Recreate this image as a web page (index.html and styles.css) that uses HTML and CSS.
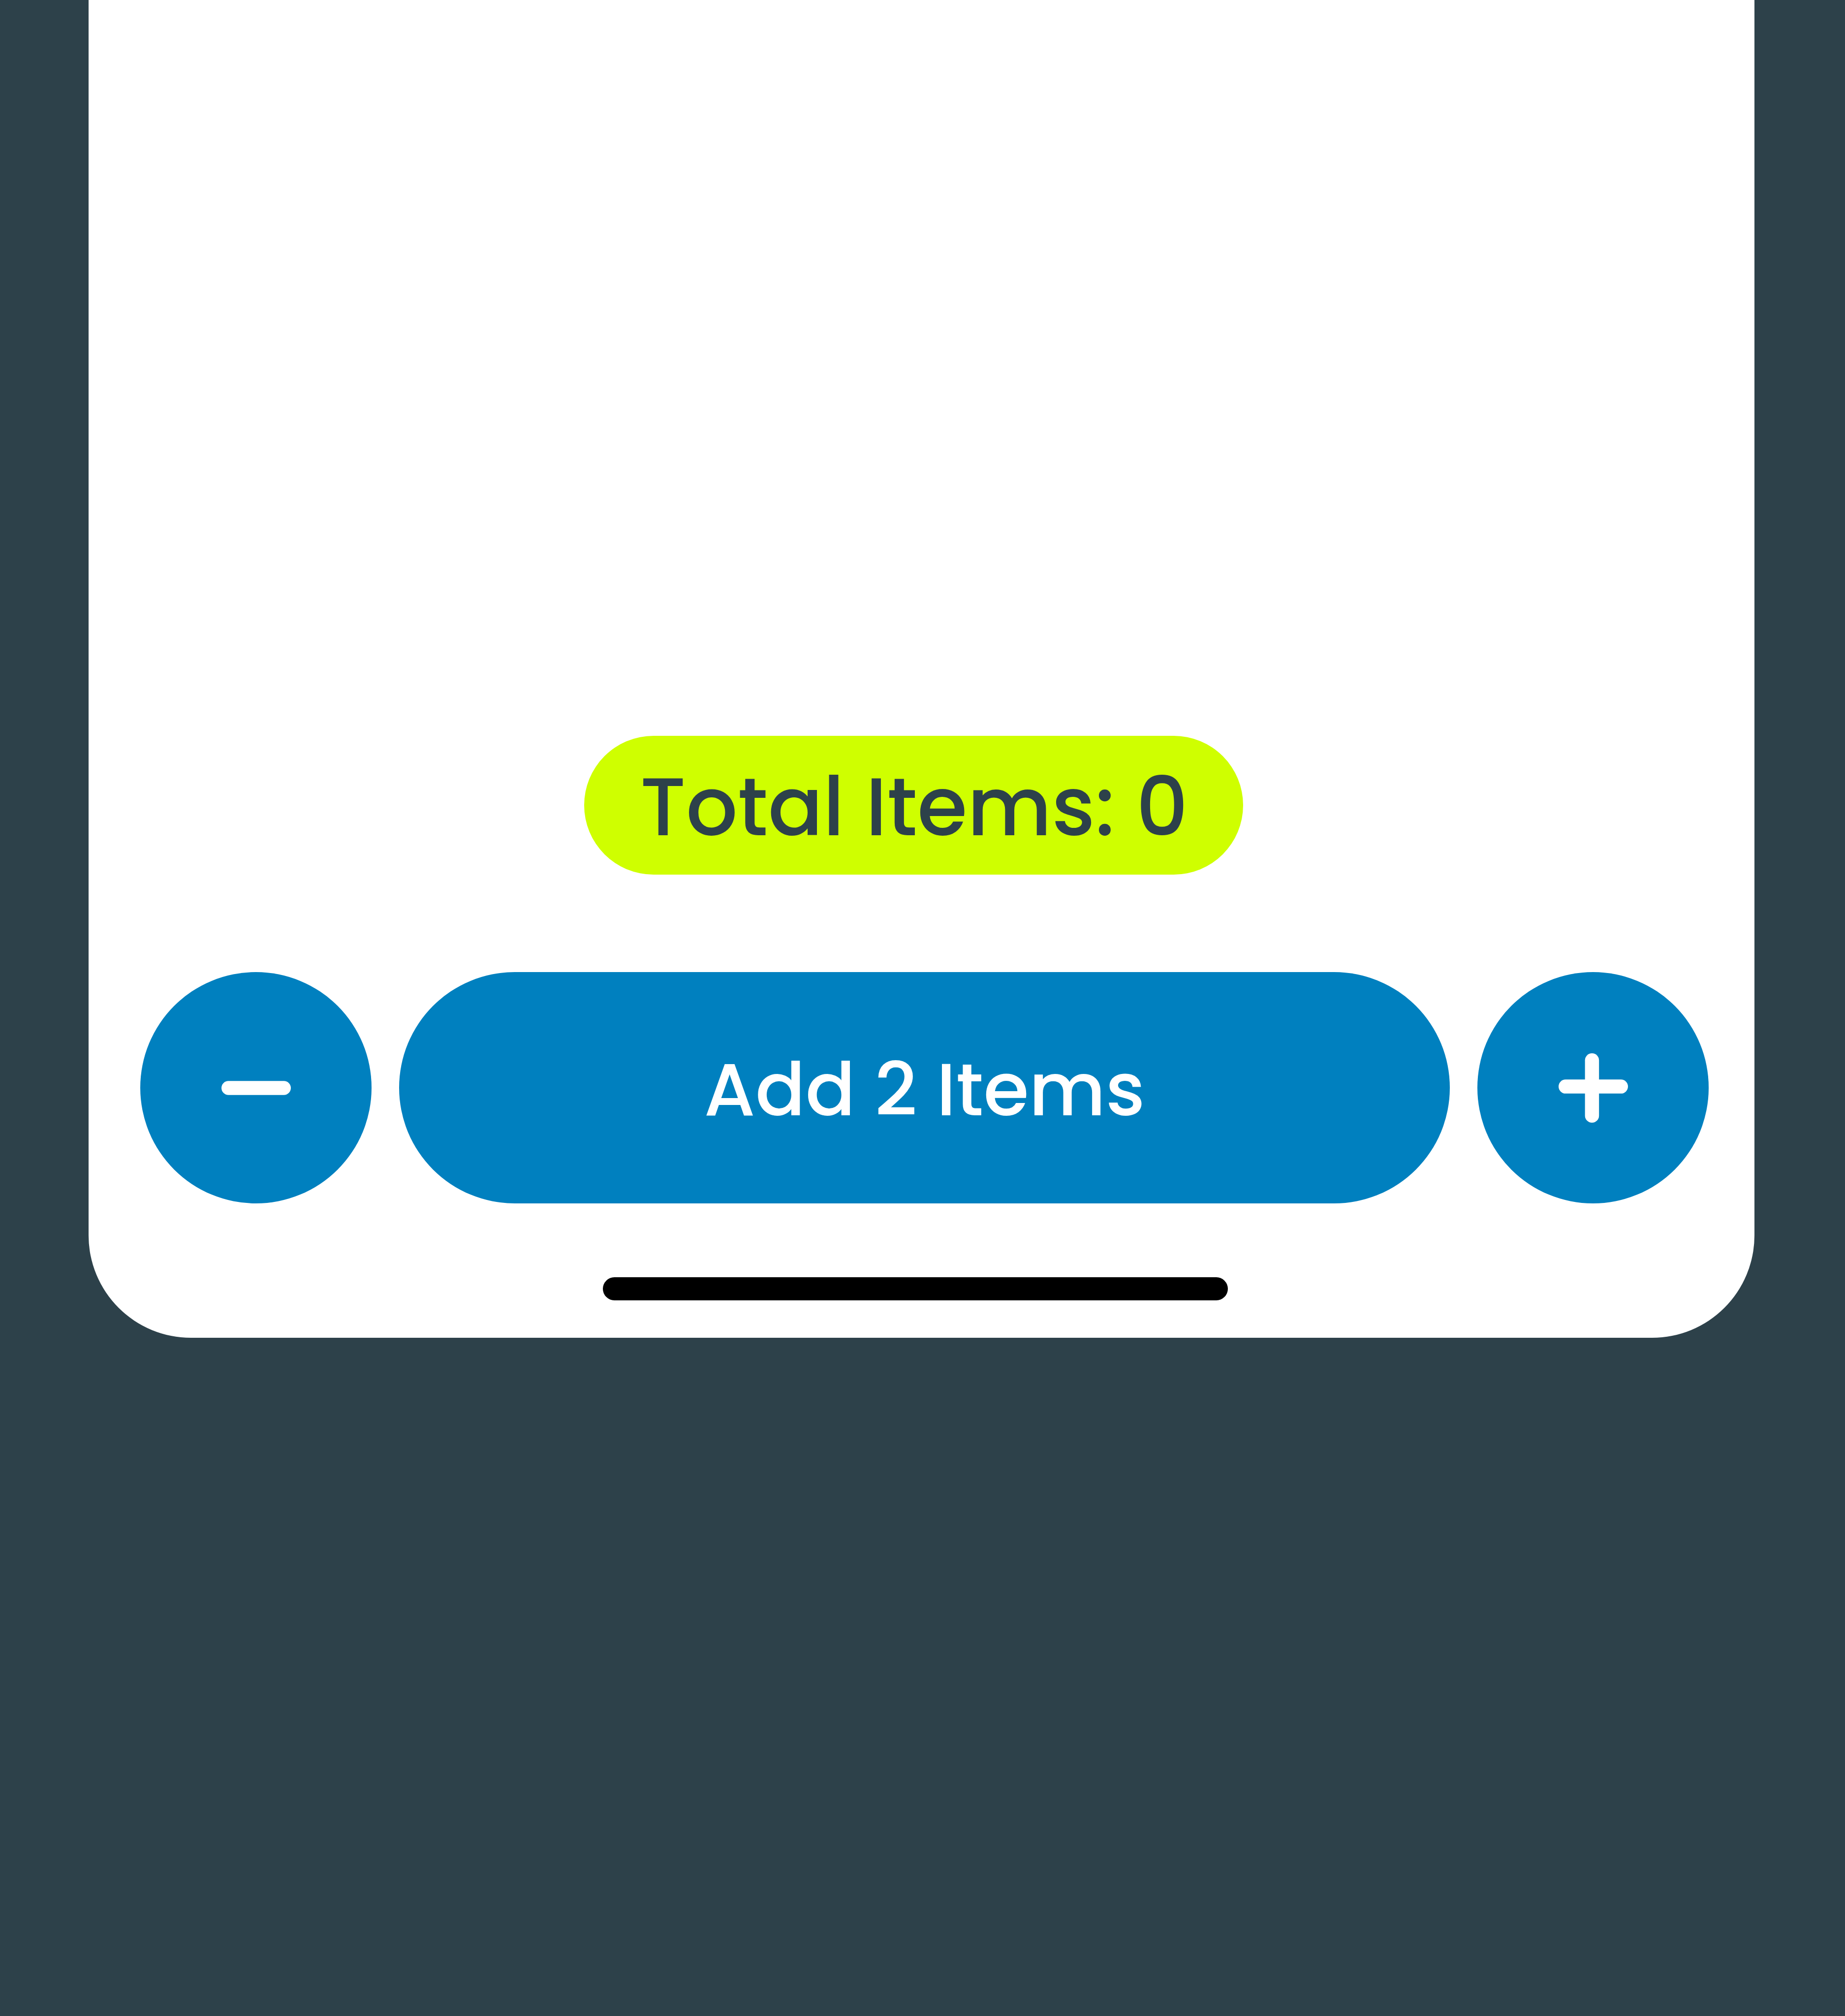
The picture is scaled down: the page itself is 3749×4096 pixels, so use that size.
FILE: index.html
```html
<!DOCTYPE html>
<html lang="en">
<head>
<meta charset="utf-8">
<meta name="viewport" content="width=device-width, initial-scale=1">
<title>Add Items</title>
<link rel="stylesheet" href="styles.css">
</head>
<body>
<main class="screen">
  <div class="status">
    <output class="total">Total Items: 0</output>
  </div>
  <div class="actions">
    <button class="round" type="button" aria-label="Decrease">
      <svg class="icon" viewBox="0 0 163 163" aria-hidden="true">
        <rect x="0" y="65" width="163" height="33" rx="16.5"/>
      </svg>
    </button>
    <button class="add" type="button">Add 2 Items</button>
    <button class="round" type="button" aria-label="Increase">
      <svg class="icon" viewBox="0 0 163 163" aria-hidden="true">
        <rect x="0" y="61.6" width="163" height="33" rx="16.5"/>
        <rect x="62" y="0" width="33" height="163" rx="16.5"/>
      </svg>
    </button>
  </div>
  <div class="home"><span class="home-bar"></span></div>
</main>
</body>
</html>
```

FILE: styles.css
```css
* {
  box-sizing: border-box;
}

body {
  display: flex;
  flex-direction: column;
  min-height: 100vh;
  margin: 0;
  padding: 0 184px 1378px 180px;
  background: #2d414a;
  font-family: Poppins, Inter, "Open Sans", sans-serif;
  font-weight: 500;
}

.screen {
  display: flex;
  flex: 1;
  flex-direction: column;
  justify-content: flex-end;
  padding: 0 93px 76px 105px;
  border-radius: 0 0 208px 208px;
  background: #fff;
}

.status {
  display: flex;
  justify-content: center;
  padding-right: 44px;
  margin-bottom: 198px;
}

.total {
  min-width: 1339px;
  padding: 8px 110px 0 112px;
  border-radius: 141px;
  background: #cfff00;
  color: #2d414a;
  font-size: 165px;
  line-height: 274px;
  text-align: center;
  white-space: nowrap;
}

.actions {
  display: flex;
  gap: 56px;
  margin-bottom: 150px;
}

button {
  height: 470px;
  border: 0;
  border-radius: 235px;
  background: #0080bf;
  color: #fff;
  font: inherit;
  cursor: pointer;
}

.round {
  display: grid;
  flex: none;
  place-items: center;
  width: 470px;
  padding: 0;
}

.add {
  flex: 1;
  padding: 8px 0 0;
  font-size: 150px;
}

.icon {
  width: 141px;
  height: 141px;
  fill: currentColor;
}

.home {
  display: flex;
  justify-content: center;
  padding-right: 38px;
}

.home-bar {
  width: 1270px;
  height: 47px;
  border-radius: 24px;
  background: #000;
}
```
